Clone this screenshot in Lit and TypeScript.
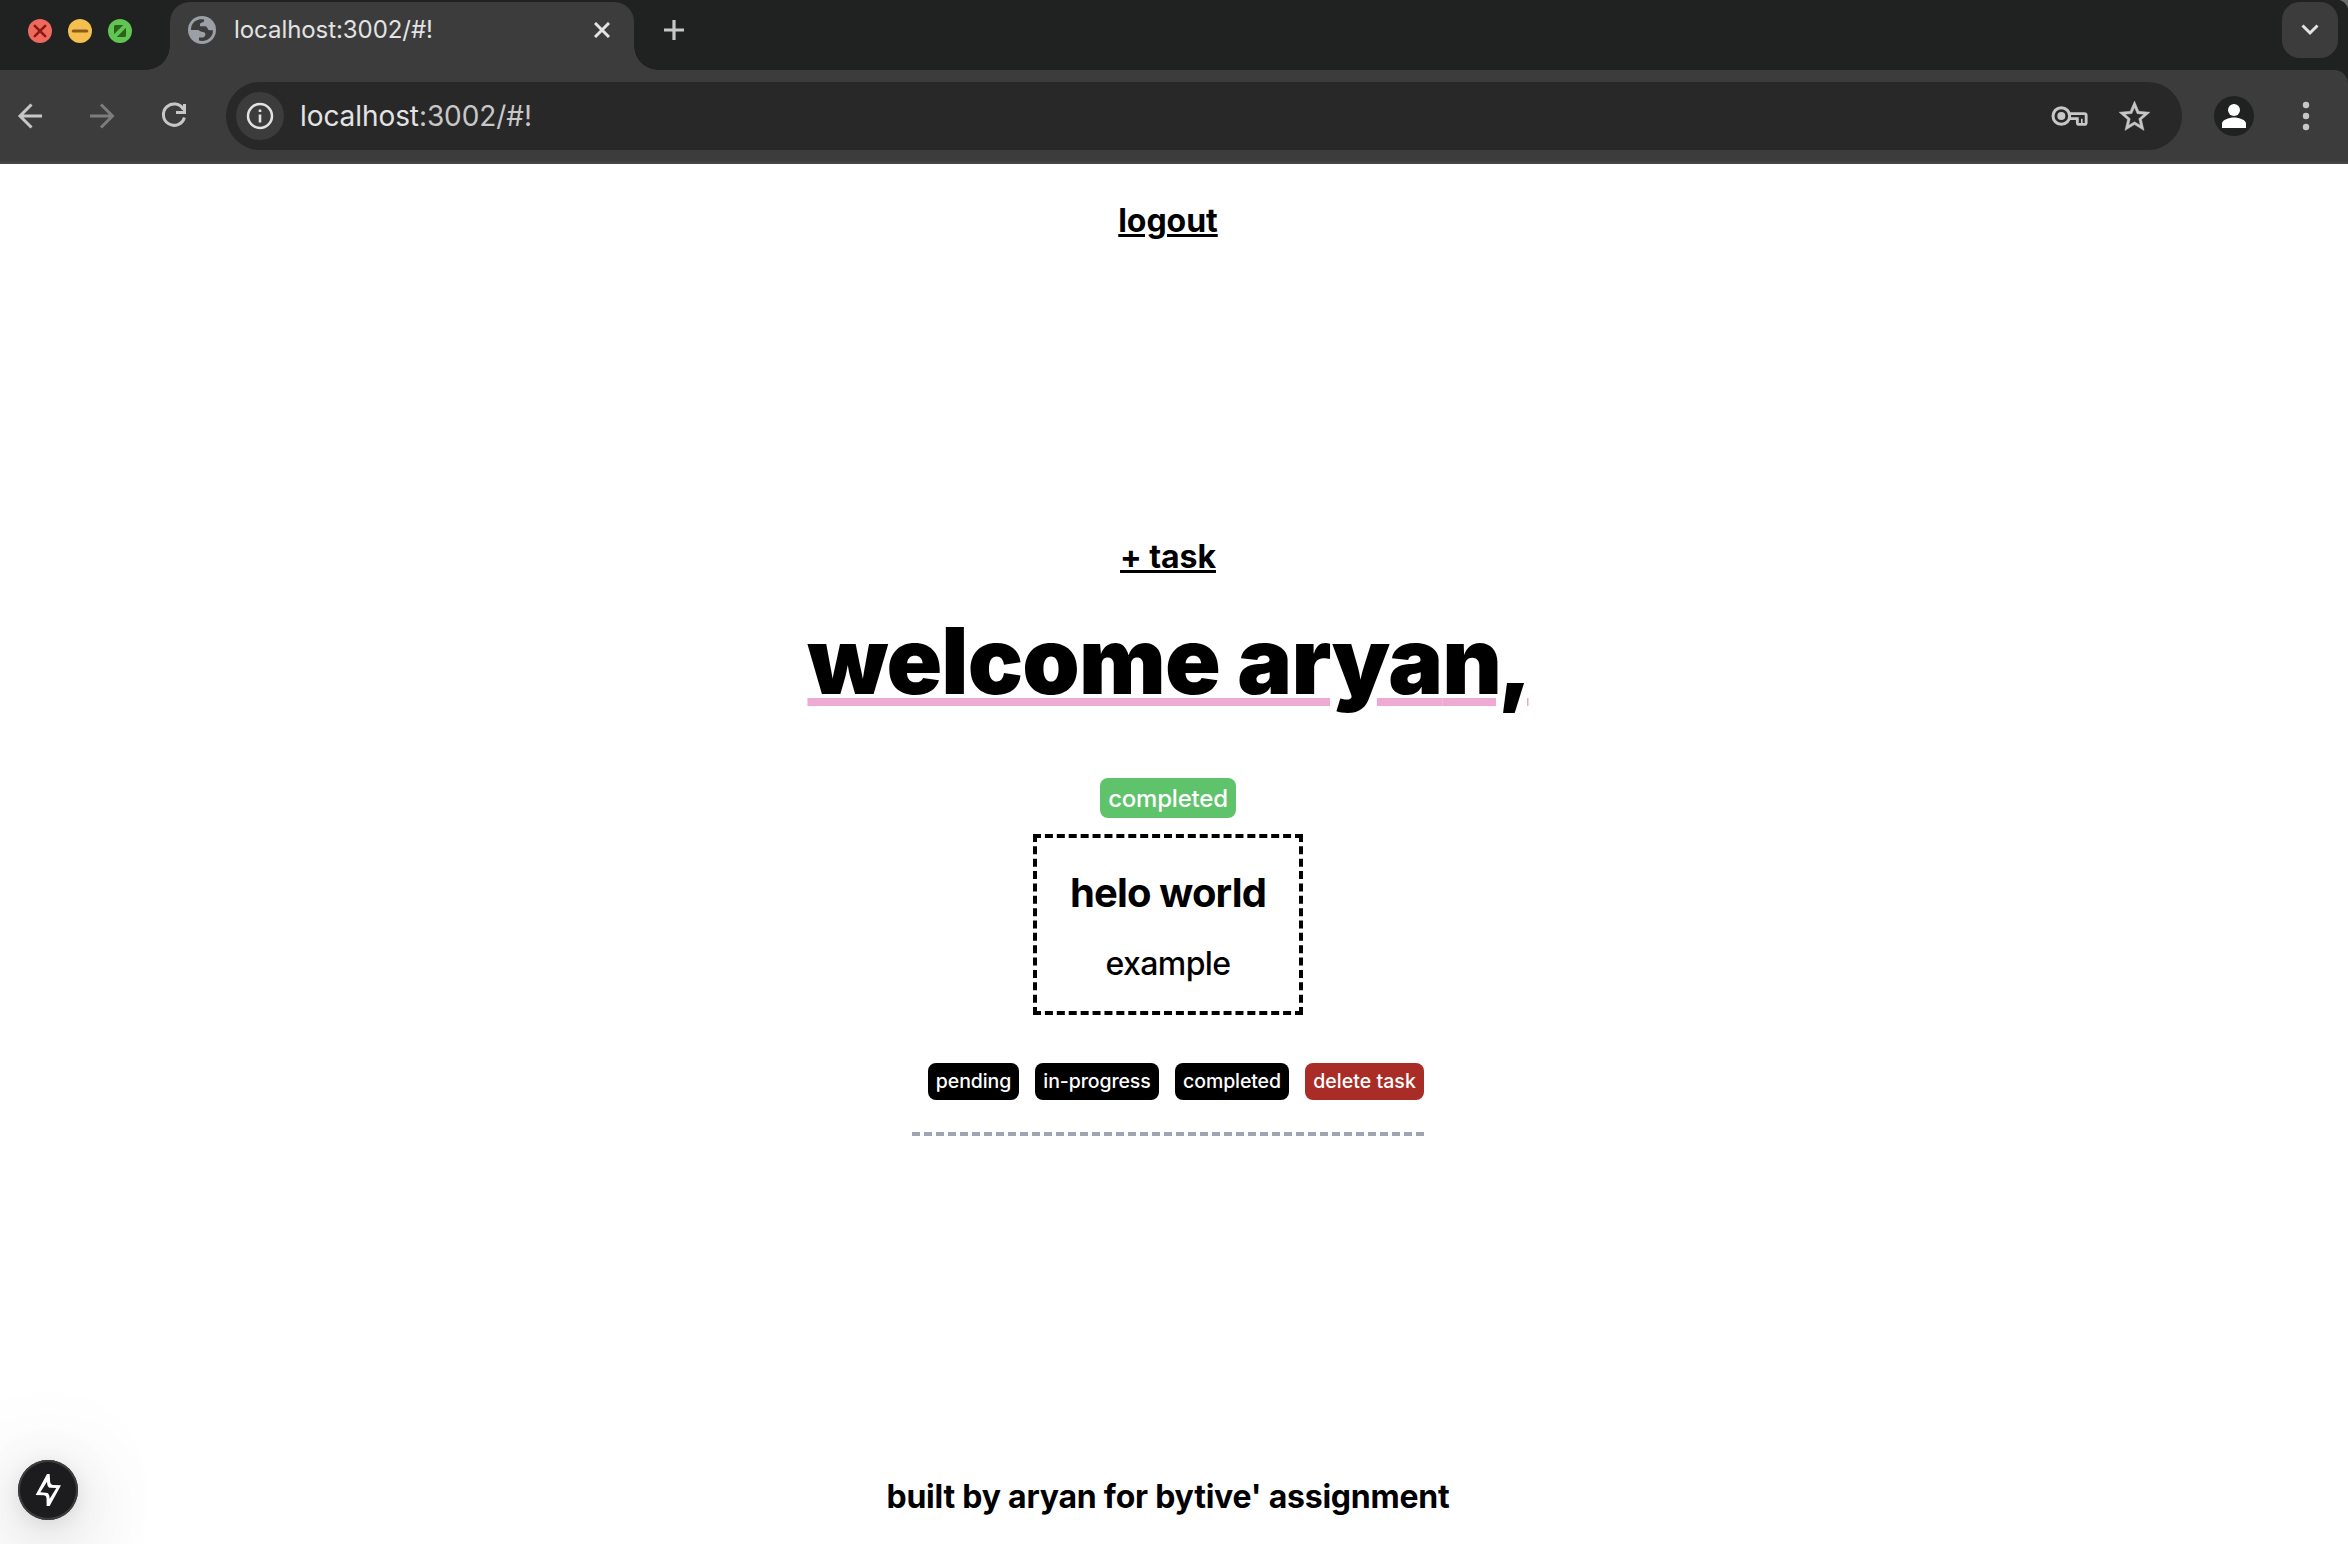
import { LitElement, html, css, svg } from "lit";
import { customElement } from "lit/decorators.js";

const icons = {
  close: svg`<circle cx="12" cy="12" r="12" fill="#ee6a5f"/><path d="M6.8 6.8l10.4 10.4M17.2 6.8L6.8 17.2" stroke="#8c1a10" stroke-width="2.6" stroke-linecap="round"/>`,
  min: svg`<circle cx="12" cy="12" r="12" fill="#f5bf4f"/><path d="M5.3 12h13.4" stroke="#8f591d" stroke-width="3.2" stroke-linecap="round"/>`,
  max: svg`<circle cx="12" cy="12" r="12" fill="#61c554"/><path d="M6 15.2V7.5Q6 6 7.5 6h7.7zM18 8.8v7.7q0 1.5-1.5 1.5H8.8z" fill="#2a6218"/>`,
};

@customElement("browser-chrome")
export class BrowserChrome extends LitElement {
  static styles = css`
    :host { display: block; height: 164px; background: #202221; font-family: Inter, "Liberation Sans", sans-serif; color: #e3e3e3; }
    svg { display: block; flex: none; }
    .strip { display: flex; align-items: flex-start; height: 70px; box-sizing: border-box; padding: 2px 10px 0 28px; background: radial-gradient(circle at 0 100%, #202221 12px, #6a6a6a 13px) top right / 12px 12px no-repeat, #202221; }
    .lights { display: flex; gap: 16px; padding-top: 17px; width: 142px; flex: none; }
    .tab { position: relative; display: flex; align-items: center; box-sizing: border-box; width: 464px; height: 68px; padding: 0 24px 12px 18px; background: #3c3c3c; border-radius: 20px 20px 0 0; font-size: 24px; font-weight: 430; letter-spacing: -0.06px; line-height: 32px; }
    .tab::before, .tab::after { content: ""; position: absolute; bottom: 0; width: 24px; height: 24px; }
    .tab::before { left: -24px; background: radial-gradient(circle at 0 0, transparent 23.5px, #3c3c3c 24px); }
    .tab::after { right: -24px; background: radial-gradient(circle at 100% 0, transparent 23.5px, #3c3c3c 24px); }
    .title { flex: 1; padding-left: 18px; }
    .plus { padding: 18px 0 0 30px; }
    .more { margin-left: auto; width: 56px; height: 56px; border-radius: 18px; background: #3c3c3c; display: grid; place-items: center; }
    .bar { display: flex; align-items: center; box-sizing: border-box; height: 94px; background: #3c3c3c; border-bottom: 2px solid #474747; border-radius: 0 14px 0 0; padding: 0 26px 0 12px; }
    .nav { display: flex; gap: 36px; width: 214px; flex: none; }
    .nav svg { width: 36px; height: 36px; }
    .url { display: flex; align-items: center; box-sizing: border-box; width: 1956px; height: 68px; border-radius: 34px; background: #282828; padding: 0 29px 0 10px; font-size: 28px; font-weight: 430; letter-spacing: -0.08px; line-height: 36px; }
    .info { width: 48px; height: 48px; border-radius: 50%; background: #3c3c3c; display: grid; place-items: center; }
    .addr { flex: 1; padding-left: 16px; }
    .rest { color: #c7c7c7; }
    .star { margin-left: 27px; }
    .avatar { margin-left: 32px; }
    .dots { margin-left: auto; }
  `;
  render() {
    return html`
      <div class="strip">
        <div class="lights">
          ${[icons.close, icons.min, icons.max].map((i) => html`<svg width="24" height="24" viewBox="0 0 24 24">${i}</svg>`)}
        </div>
        <div class="tab">
          <svg width="28" height="28" viewBox="0 0 28 28"><circle cx="14" cy="14" r="14" fill="#9aa0a6"/><path fill="#3c3c3c" d="M3 14C3 8 7 4 12 3.3h3.5c1 0 1 2.5-.5 3-1.5.4-3 .7-3 2v2h5.500c2 0 2 4 4 4H25C25 21 20 25 14 25q-3 0-3-.8V21.400h3.500c3 0 4-4.400 1.500-5.200l-3-.6c-1.700-.4-1.500-1.600-3-1.600z"/></svg>
          <span class="title">localhost:3002/#!</span>
          <svg width="16" height="16" viewBox="0 0 16 16"><path d="M1 1l14 14M15 1L1 15" stroke="#e3e3e3" stroke-width="3"/></svg>
        </div>
        <svg class="plus" width="20" height="20" viewBox="0 0 20 20"><path d="M10 0v20M0 10h20" stroke="#c7c7c7" stroke-width="3.2"/></svg>
        <div class="more"><svg width="18" height="12" viewBox="0 0 18 12"><path d="M1.500 1.500L9 9l7.500-7.500" fill="none" stroke="#e3e3e3" stroke-width="3"/></svg></div>
      </div>
      <div class="bar">
        <div class="nav">
          <svg viewBox="0 0 36 36"><path d="M19.500 6.500L8 18l11.500 11.500M8 18h22" fill="none" stroke="#c7c7c7" stroke-width="3"/></svg>
          <svg viewBox="0 0 36 36"><path d="M17 6.500L28.500 18 17 29.500M28.500 18H6" fill="none" stroke="#7d7d7d" stroke-width="3"/></svg>
          <svg viewBox="0 0 36 36"><path d="M27.500 11.500A10.700 10.700 0 1 0 28.400 19.500M28.500 6V14.500H20" fill="none" stroke="#c7c7c7" stroke-width="3"/></svg>
        </div>
        <div class="url">
          <div class="info"><svg width="28" height="28" viewBox="0 0 28 28"><circle cx="14" cy="14" r="12" fill="none" stroke="#e3e3e3" stroke-width="2.500"/><path d="M14 12.500v8M14 7.500v2.600" stroke="#e3e3e3" stroke-width="2.600"/></svg></div>
          <span class="addr">localhost<span class="rest">:3002/#!</span></span>
          <svg width="38" height="24" viewBox="22 36 114 72" fill="none" stroke="#c7c7c7"><circle cx="53" cy="72" r="25" stroke-width="9"/><circle cx="53" cy="72" r="12" fill="#c7c7c7" stroke="none"/><path d="M76 65H122a5.500 5.500 0 0 1 5.500 5.500V92a5 5 0 0 1-5 5H106a5 5 0 0 1-5-5V80H76" stroke-width="8.500"/><path d="M114.500 80V96" stroke-width="5"/></svg>
          <svg class="star" width="37" height="37" viewBox="0 0 24 24"><path fill="#c7c7c7" stroke="#c7c7c7" stroke-width=".3" d="M22 9.240l-7.190-.62L12 2 9.190 8.630 2 9.240l5.460 4.730L5.820 21 12 17.270 18.180 21l-1.630-7.030L22 9.240zM12 15.400l-3.760 2.270 1-4.280-3.320-2.880 4.380-.38L12 6.100l1.710 4.040 4.380.38-3.320 2.880 1 4.280L12 15.400z"/></svg>
        </div>
        <svg class="avatar" width="40" height="40" viewBox="0 0 40 40"><circle cx="20" cy="20" r="20" fill="#202221"/><circle cx="20" cy="14" r="6" fill="#fff"/><path d="M8 32v-4.500c0-3.500 7-6 12-6s12 2.500 12 6V32z" fill="#fff"/></svg>
        <svg class="dots" width="32" height="32" viewBox="0 0 32 32" fill="#c7c7c7"><circle cx="16" cy="5" r="3.200"/><circle cx="16" cy="16" r="3.200"/><circle cx="16" cy="27" r="3.200"/></svg>
      </div>
    `;
  }
}

interface Action { label: string; kind: string; }

@customElement("app-root")
export class AppRoot extends LitElement {
  static styles = css`
    :host { display: block; height: 1544px; overflow: hidden; background: #fff; color: #000; font-family: Inter, "Liberation Sans", sans-serif; }
    .page { position: relative; display: flex; flex-direction: column; align-items: center; box-sizing: border-box; width: 2336px; height: 1380px; padding-top: 37px; white-space: nowrap; }
    .link { font-size: 32px; font-weight: 700; line-height: 40px; letter-spacing: -0.05px; text-decoration: underline; text-decoration-thickness: 3px; text-underline-offset: 2px; color: inherit; }
    .add { margin-top: 296px; }
    h1 { margin: 36px 0 0; font-size: 92px; font-weight: 900; line-height: 96px; letter-spacing: -0.85px; text-decoration: underline; text-decoration-color: #eeaad2; text-decoration-thickness: 8px; text-underline-offset: 4px; }
    .tail { letter-spacing: -3.9px; }
    .badge { margin-top: 69px; width: 136px; height: 40px; border-radius: 8px; background: #5fc36b; color: #fff; font-size: 24px; font-weight: 450; letter-spacing: -0.2px; line-height: 41px; text-align: center; }
    .card { margin-top: 16px; box-sizing: border-box; width: 270px; height: 181px; border: 4px dashed #000; padding-top: 31px; text-align: center; }
    h2 { margin: 0; font-size: 40px; font-weight: 700; line-height: 48px; letter-spacing: -0.85px; }
    .desc { margin: 27px 0 0; font-size: 32px; font-weight: 450; line-height: 40px; letter-spacing: -0.6px; }
    .task { display: flex; flex-direction: column; align-items: flex-end; width: 512px; margin-top: 48px; border-bottom: 4px dashed #a0a3b1; padding-bottom: 32px; }
    .actions { display: flex; gap: 16px; }
    .btn { box-sizing: border-box; height: 37px; border-radius: 8px; background: #000; color: #fff; font-size: 19.5px; font-weight: 450; line-height: 37px; text-align: center; letter-spacing: -0.1px; }
    .pending { width: 91px; }
    .progress { width: 124px; }
    .completed { width: 114px; }
    .delete { width: 119px; background: #a92c26; letter-spacing: 0.05px; }
    footer { margin-top: 341px; font-size: 32px; font-weight: 700; line-height: 40px; letter-spacing: -0.228px; }
    .fab { position: absolute; left: 18px; bottom: 24px; width: 60px; height: 60px; border-radius: 50%; background: #1c1c1e; box-shadow: inset 0 0 0 2px #3c3c3e, 0 22px 80px rgba(0,0,0,.22), 0 4px 20px rgba(0,0,0,.1), 0 0 120px 20px rgba(0,0,0,.04); }
    .fab svg { display: block; }
  `;
  private actions: Action[] = [
    { label: "pending", kind: "pending" },
    { label: "in-progress", kind: "progress" },
    { label: "completed", kind: "completed" },
    { label: "delete task", kind: "delete" },
  ];
  render() {
    return html`
      <browser-chrome></browser-chrome>
      <div class="page">
        <a class="link">logout</a>
        <a class="link add">+ task</a>
        <h1>welcome arya<span class="tail">n,</span></h1>
        <div class="badge">completed</div>
        <div class="card"><h2>helo world</h2><p class="desc">example</p></div>
        <div class="task"><div class="actions">${this.actions.map((a) => html`<div class="btn ${a.kind}">${a.label}</div>`)}</div></div>
        <footer>built by aryan for bytive' assignment</footer>
        <div class="fab"><svg width="60" height="60" viewBox="18 18 180 180"><path fill="#fff" fill-rule="evenodd" d="M105 60L71 123L96 124Q103 125 103.500 132L104 156H113L147 94L122 93Q115 92 114.500 85L113 60zM105 83L106 92Q108 101 116 101.500L133 102L113 134L112 126Q110 116 102 116L85 115z"/></svg></div>
      </div>
    `;
  }
}
